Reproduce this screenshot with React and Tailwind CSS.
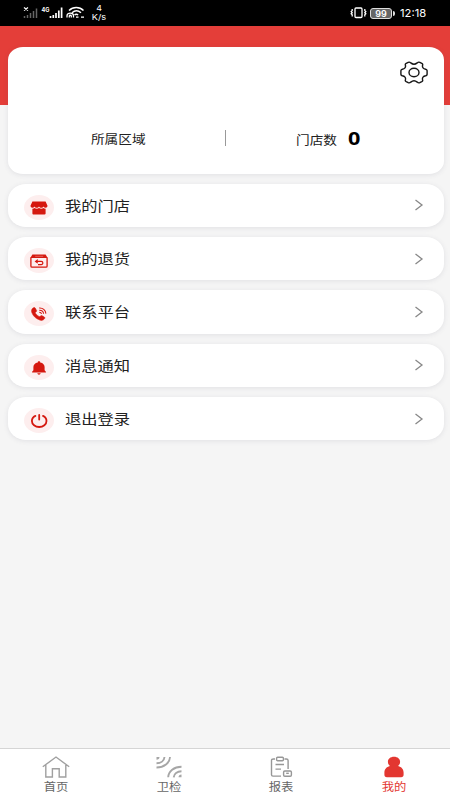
import clsx from 'clsx';

function ShopIcon() {
  return (
    <svg className="w-[18px] h-[14px]" viewBox="0 0 18 14" fill="#d5180f">
      <path d="M2.4 0.5h13.2l1.9 4.2c0 1.2-.8 2-1.9 2s-1.8-.8-2.1-1.3c-.4.8-1.2 1.3-2.2 1.3S9.4 6.2 9 5.4c-.4.8-1.3 1.3-2.3 1.3s-1.8-.5-2.2-1.3C4.2 5.9 3.5 6.7 2.4 6.7S.5 5.9.5 4.7z" />
      <path d="M2.4 7.8c1 0 1.7-.3 2.2-.8 1.3 1 3 1 4.4 0 1.4 1 3.1 1 4.4 0 .5.5 1.2.8 2.2.8v4.7c0 .5-.4.9-.9.9H3.3c-.5 0-.9-.4-.9-.9z" />
    </svg>
  );
}

function ReturnIcon() {
  return (
    <svg className="w-[18px] h-[14px]" viewBox="0 0 18 14" fill="none" stroke="#d5180f">
      <path d="M.3 4L2.4.6h13.200L17.700 4z" fill="#d5180f" stroke="none" />
      <path d="M5.200 2.300h8" stroke="#f5aaa4" strokeWidth="0.500" />
      <path d="M.9 3.500V12c0 .7.4 1.200 1.100 1.200h14c.7 0 1.100-.5 1.100-1.200V3.500" strokeWidth="1.300" />
      <path d="M7.800 5.600L5.600 7.400l2.200 1.700M5.800 7.400h5.400c2.200 0 2.200 3.300 0 3.300H8" strokeWidth="1.200" />
    </svg>
  );
}

function PhoneIcon() {
  return (
    <svg className="w-[16px] h-[14px]" viewBox="0 0 16 14" fill="none" stroke="#d5180f">
      <path
        d="M1.700 1.200C2.500.4 3.700.3 4.200 1l1.400 2.400c.3.6-.1 1.200-.9 1.700-.5.400-.4.800-.1 1.300.8 1.300 1.900 2.300 3.400 3 .5.200.9.200 1.300-.2.600-.6 1.200-.9 1.800-.5l2.300 1.400c.7.500.6 1.100-.1 1.900-1.100 1.200-2.600 1.800-4.500 1.100C4.800 11.700 2.100 9.100.8 5.600c-.6-1.800-.2-3.400.9-4.400z"
        fill="#d5180f"
        strokeWidth="0.500"
      />
      <path d="M8.200 1c3.500-.3 6.500 2.200 6.700 5.600M8.200 3.200c2.400-.1 4.200 1.500 4.400 3.600M8.200 5.200c1.200 0 2.100.7 2.300 1.800" strokeWidth="1.100" />
    </svg>
  );
}

function BellIcon() {
  return (
    <svg className="w-[16px] h-[14px]" viewBox="0 0 16 14" fill="#d5180f">
      <path d="M8 .2c.8 0 1.200.4 1.200.9v.3c2.900.5 4.400 2.400 4.400 4.700v3.200l1.300 1.400v.8H1.100v-.8l1.300-1.400V6.100c0-2.300 1.500-4.200 4.400-4.700v-.3c0-.5.4-.9 1.200-.9z" />
      <path d="M6.300 12.300h3.400c-.2.900-.8 1.400-1.700 1.400s-1.500-.5-1.700-1.400z" />
    </svg>
  );
}

function PowerIcon() {
  return (
    <svg className="w-[18px] h-[14px]" viewBox="0 0 18 14" fill="none" stroke="#d5180f" strokeWidth="1.800" strokeLinecap="round">
      <path d="M9.200 1v4.600M5.400 1.900C3.200 2.900 1.900 4.800 1.900 7c0 3.400 3.300 6 7.300 6s7.300-2.600 7.300-6c0-2.200-1.300-4.100-3.500-5.100" />
    </svg>
  );
}

function GearIcon() {
  return (
    <svg className="w-[28px] h-[23px]" viewBox="0 0 28 23" fill="none" stroke="#161616" strokeWidth="1.400" strokeLinejoin="round">
      <path d="M8.200 1.300C9.200.9 10 1.100 10.800 1.900c1.800 1.500 4.600 1.500 6.400 0 .8-.8 1.600-1 2.600-.6l2 1c.9.500 1.100 1.100.8 2-.6 2 .7 3.500 3 3.900 1 .2 1.400.7 1.500 1.500v3.600c-.1.800-.5 1.300-1.500 1.500-2.300.4-3.600 1.900-3 3.900.3.900.1 1.500-.8 2l-2 1c-1 .4-1.800.2-2.600-.6-1.800-1.500-4.600-1.500-6.400 0-.8.8-1.600 1-2.600.6l-2-1c-.9-.5-1.100-1.100-.8-2 .6-2-.7-3.500-3-3.900-1-.2-1.400-.7-1.500-1.500V9.700c.1-.8.5-1.300 1.500-1.500 2.300-.4 3.600-1.900 3-3.900-.3-.9-.1-1.500.8-2z" />
      <ellipse cx="14" cy="11.500" rx="5" ry="4.200" />
    </svg>
  );
}

function HomeIcon() {
  return (
    <svg className="w-[28px] h-[22px]" viewBox="0 0 28 22" fill="none" stroke="#a0a0a0" strokeWidth="1.400">
      <path d="M.8 10.800L14 1l13.200 9.800M3.800 9v12h6.600v-8.200h6.800V21h6.600V9" />
    </svg>
  );
}

function CheckIcon() {
  return (
    <svg className="w-[28px] h-[22px]" viewBox="0 0 28 22" fill="none" stroke="#a6a6a6" strokeWidth="1.900">
      <path d="M1.500 7.300C5.800 7.200 9.200 4.800 9.500 1M1.500 11.500C9 11.500 14.700 7 15 1" />
      <path d="M26.500 15.200c-4.300.1-7.500 2.600-7.800 6.100M26.500 10.800c-7.500 0-13 4.500-13.300 10.500" />
      <path d="M1.500 1h3c0 1.700-1.200 2.800-3 2.800zM26.500 21.300h-3c0-1.700 1.200-2.800 3-2.800z" fill="#a6a6a6" stroke="none" />
    </svg>
  );
}

function ReportIcon() {
  return (
    <svg className="w-[24px] h-[22px]" viewBox="0 0 24 22" fill="none" stroke="#979797" strokeWidth="1.400">
      <path d="M6 3H4.500C3 3 2.500 3.500 2.500 4.500v14.200c0 .9.600 1.400 1.500 1.400h8M15.500 3h1.800c1.200 0 1.800.5 1.800 1.500V13" />
      <rect x="7.600" y="1.300" width="6.800" height="3.500" rx="1" />
      <path d="M6.500 8.500h8.500M6.500 13.100h5.500" />
      <rect x="14.600" y="15" width="7.800" height="5.300" rx="1.200" />
      <path d="M17.200 17.300h2.600" />
    </svg>
  );
}

function MineIcon() {
  return (
    <svg className="w-[20px] h-[22px]" viewBox="0 0 20 22" fill="#e33731">
      <path d="M10 .7c3.700 0 6.100 2.200 6.100 5.100 0 1.700-.7 3.100-2 4.100 3.400.8 5.500 3.300 5.500 6.700v2.200c0 1.600-.8 2.400-2.500 2.400H2.900C1.200 21.200.4 20.400.4 18.800v-2.200c0-3.400 2.100-5.900 5.500-6.700-1.300-1-2-2.400-2-4.100C3.900 2.900 6.300.7 10 .7z" />
    </svg>
  );
}

const menuItems = [
  { label: '我的门店', Icon: ShopIcon },
  { label: '我的退货', Icon: ReturnIcon },
  { label: '联系平台', Icon: PhoneIcon },
  { label: '消息通知', Icon: BellIcon },
  { label: '退出登录', Icon: PowerIcon },
];

const tabs = [
  { label: '首页', Icon: HomeIcon },
  { label: '卫检', Icon: CheckIcon },
  { label: '报表', Icon: ReportIcon },
  { label: '我的', Icon: MineIcon, active: true },
];

function StatusBar() {
  return (
    <header className="h-[26px] bg-black text-white flex items-center justify-between px-[23px]">
      <div className="flex items-center h-full">
        <svg className="w-[62px] h-[14px]" viewBox="0 0 62 14" fill="none" stroke="#fff">
          <path d="M1 1.500l4 3M5 1.500l-4 3" strokeWidth="1.200" />
          <path d="M1.500 12v-2M4.500 12V9M7.500 12V7M10.500 12V5M13.500 12V2.500" stroke="#666" strokeWidth="1.500" />
          <text x="18.500" y="6" fill="#fff" stroke="none" fontSize="6" fontWeight="700" textLength="8" lengthAdjust="spacingAndGlyphs">
            4G
          </text>
          <path d="M27.500 12v-2M30.300 12V9M33 12V7M35.800 12V4.500M38.600 12V1.500" strokeWidth="1.700" />
          <path d="M46 4.500c4-4 10.500-4 14.500 0M49 6.700c2.700-2.300 6.300-2.300 9 0M51.500 9c1.200-1 2.400-1 3.600 0" strokeWidth="1.500" />
          <path d="M44 11.500V9.700c0-3.500 6.500-3.500 6.500 0v1.800M46.300 11.500V10c0-1 2-1 2 0v1.500M53 11.200h2.500M58 11.200h3" strokeWidth="1.300" />
        </svg>
        <div className="w-[18px] ml-[5px] text-[8px] leading-[9px] text-center">
          <div className="scale-x-[1.100]">4</div>
          <div className="scale-x-[1.150]">K/s</div>
        </div>
      </div>
      <div className="flex items-center">
        <svg className="w-[17px] h-[12px]" viewBox="0 0 17 12" fill="none" stroke="#fff" strokeWidth="1.300">
          <rect x="5" y="1" width="7" height="9.500" rx="1" />
          <path d="M2.200 2v1.600l-1 1 1 1.200-1 1 1 1V9.500M14.800 2v1.600l1 1-1 1.200 1 1-1 1V9.500" />
        </svg>
        <div className="w-[22px] h-[11px] ml-[3px] border border-[#ddd] rounded-[3px] bg-[#666] text-[9px] leading-[9px] font-semibold text-center">
          99
        </div>
        <div className="w-[2px] h-[5px] ml-px bg-[#ddd] rounded-r" />
        <span className="ml-[5px] w-[27px] text-[11px] leading-[14px] whitespace-nowrap">
          <span className="inline-block origin-left scale-x-[1.020]">12:18</span>
        </span>
      </div>
    </header>
  );
}

function ProfileCard() {
  return (
    <section className="h-[126.500px] rounded-[15px/13px] bg-white shadow-[0_1px_5px_rgba(80,80,110,0.12)] flex flex-col">
      <div className="flex justify-end pt-[14px] pr-[16px]">
        <GearIcon />
      </div>
      <div className="flex items-center mt-[42px] h-[26px] text-[12px] text-[#222]">
        <div className="w-[217px] flex justify-center">
          <span className="scale-x-[1.140] pl-[4px] pt-px">所属区域</span>
        </div>
        <div className="w-[1.500px] h-[16px] bg-[#999] -mt-[3px]" />
        <div className="flex-1 flex items-center justify-center pr-[13px]">
          <span className="w-[41px] pt-[3px]">
            <span className="inline-block origin-left scale-x-[1.140] whitespace-nowrap">门店数</span>
          </span>
          <span className="ml-[11px] -mt-px w-[12px] text-[18px] font-bold text-black origin-left scale-x-[1.200] font-['Open_Sans']">0</span>
        </div>
      </div>
    </section>
  );
}

function MenuRow({ label, Icon }) {
  return (
    <a className="h-[43.400px] rounded-[18px/16px] bg-white shadow-[0_1px_5px_rgba(80,80,110,0.12)] flex items-center pl-[16.500px] pr-[20px] cursor-pointer">
      <span className="w-[30px] h-[25px] mt-[4px] pt-px rounded-[50%] bg-[#fdeeee] flex items-center justify-center">
        <Icon />
      </span>
      <span className="ml-[11px] text-[14px] text-[#222] origin-left scale-x-[1.160] whitespace-nowrap">{label}</span>
      <svg className="w-[10px] h-[12px] ml-auto" viewBox="0 0 10 12" fill="none" stroke="#888" strokeWidth="1.300">
        <path d="M1.500 1l6.500 5-6.500 5" />
      </svg>
    </a>
  );
}

function TabBar() {
  return (
    <nav className="h-[52px] border-t border-[#d5d5d5] bg-white grid grid-cols-4">
      {tabs.map(({ label, Icon, active }) => (
        <a key={label} className="flex flex-col items-center pt-[7px] cursor-pointer">
          <Icon />
          <span className={clsx('mt-px text-[11px] leading-[16px] scale-x-[1.120]', active ? 'text-[#e33731]' : 'text-[#666]')}>
            {label}
          </span>
        </a>
      ))}
    </nav>
  );
}

export default function App() {
  return (
    <div className="w-[450px] h-[800px] overflow-hidden flex flex-col bg-[#f5f5f5] font-['Inter','Noto_Sans_CJK_SC',sans-serif]">
      <StatusBar />
      <main className="flex-1 flex flex-col gap-[10px] pt-[21px] pl-[7.500px] pr-[6.500px] bg-linear-to-b from-[#e43e39] from-[79.500px] to-transparent to-[79.500px]">
        <ProfileCard />
        {menuItems.map((item) => (
          <MenuRow key={item.label} {...item} />
        ))}
      </main>
      <TabBar />
    </div>
  );
}
